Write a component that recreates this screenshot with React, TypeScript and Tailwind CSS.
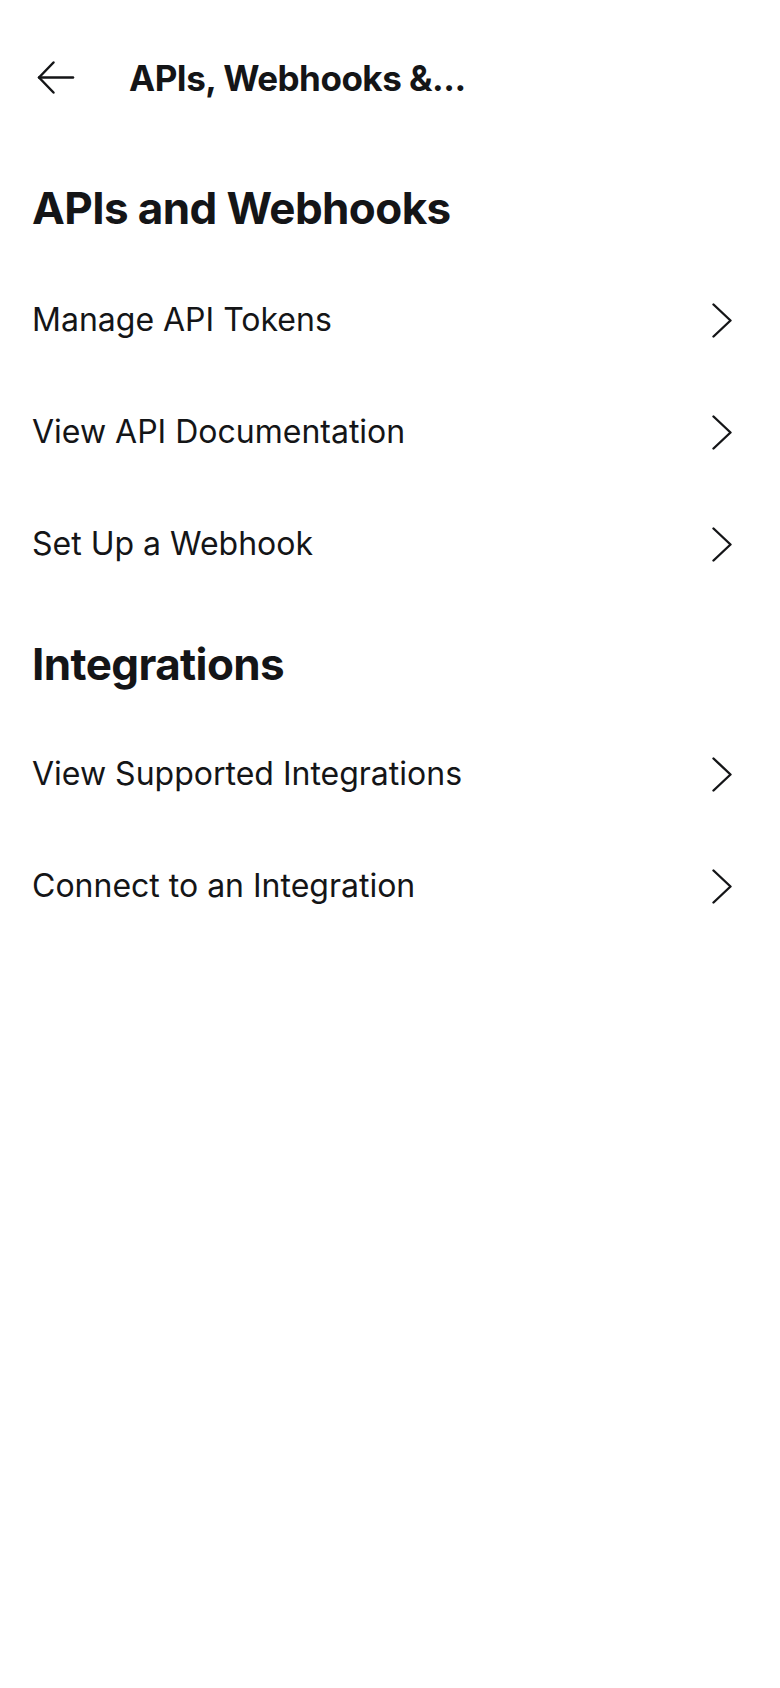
const sections = [
  { title: "APIs and Webhooks", items: ["Manage API Tokens", "View API Documentation", "Set Up a Webhook"] },
  { title: "Integrations", items: ["View Supported Integrations", "Connect to an Integration"] },
];

function Chevron() {
  return (
    <svg width="20" height="35" viewBox="0 0 20 35" fill="none" stroke="#141517" strokeWidth="2.4" strokeLinecap="round" strokeLinejoin="round">
      <polyline points="1.5,1.5 18.5,17.5 1.5,33.5" />
    </svg>
  );
}

function BackArrow() {
  return (
    <svg width="40" height="36" viewBox="0 0 40 36" fill="none" stroke="#141517" strokeWidth="2.5" strokeLinecap="round" strokeLinejoin="round">
      <line x1="3" y1="17.5" x2="37" y2="17.5" />
      <polyline points="17.5,2.5 3,17.5 17.5,32.5" />
    </svg>
  );
}

export default function App() {
  return (
    <div className="min-h-[1688px] bg-white text-[#141517]" style={{ fontFamily: "Inter, 'Noto Sans', sans-serif" }}>
      {/* Top bar */}
      <div className="flex h-[156px] items-center">
        <button className="ml-[36px] flex h-[36px] w-[40px] items-center justify-center">
          <BackArrow />
        </button>
        <h1 className="ml-[53px] text-[35px] font-bold leading-[44px] tracking-[-0.5px]">APIs, Webhooks &...</h1>
      </div>

      {sections.map((s, si) => (
        <section key={s.title} className={si === 0 ? "mt-[28px]" : "mt-[40px]"}>
          <h2 className={`px-8 text-[44px] font-bold leading-[48px] tracking-[-0.6px] ${si === 0 ? "mb-[32px]" : "mb-[30px]"}`}>{s.title}</h2>
          {s.items.map(item => (
            <div key={item} className="flex h-[112px] items-center justify-between pl-8 pr-[48px]">
              <span className="text-[32px] leading-[40px]">{item}</span>
              <Chevron />
            </div>
          ))}
        </section>
      ))}
    </div>
  );
}
